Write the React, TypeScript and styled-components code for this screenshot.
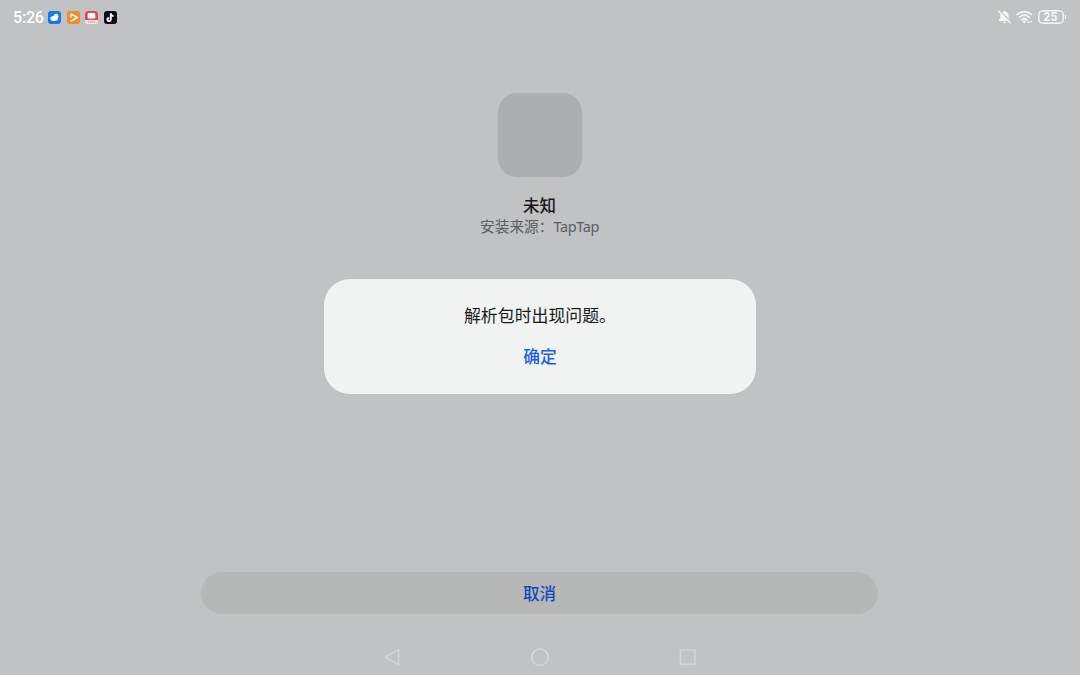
import React from 'react'
import styled, { createGlobalStyle } from 'styled-components'

const GlobalStyle = createGlobalStyle`
    * {
        box-sizing: border-box;
    }
    body {
        margin: 0;
        background: #c1c2c4;
        font-family: "Noto Sans CJK SC", "Noto Sans", sans-serif;
    }
`

const App = () => {
    return (
        <Screen>
            <GlobalStyle />
            <StatusBar>
                <StatusGroup>
                    <Clock>5:26</Clock>
                    <AppIcons>
                        <WeatherIcon />
                        <VideoIcon />
                        <TvIcon />
                        <TiktokIcon />
                    </AppIcons>
                </StatusGroup>
                <StatusGroup>
                    <MuteIcon />
                    <WifiIcon />
                    <Battery>
                        <BatteryBody>25</BatteryBody>
                        <BatteryTip />
                    </Battery>
                </StatusGroup>
            </StatusBar>
            <Main>
                <AppLogo />
                <AppName>未知</AppName>
                <Source>安装来源：<Latin>TapTap</Latin></Source>
            </Main>
            <CancelButton>取消</CancelButton>
            <NavBar>
                <svg width="18" height="18" viewBox="0 0 18 18">
                    <path d="M15.6 1.7v14.8L2.2 9.1z" />
                </svg>
                <svg width="18" height="18" viewBox="0 0 18 18">
                    <circle cx="9" cy="9.2" r="8.2" />
                </svg>
                <svg width="18" height="18" viewBox="0 0 18 18">
                    <rect x="1.4" y="2" width="14.4" height="14.4" />
                </svg>
            </NavBar>
            <Overlay>
                <Dialog>
                    <Message>解析包时出现问题。</Message>
                    <ConfirmButton>确定</ConfirmButton>
                </Dialog>
            </Overlay>
        </Screen>
    )
}

const WeatherIcon = () => (
    <svg width="13" height="13" viewBox="0 0 13 13">
        <rect width="13" height="13" rx="3" fill="#147be6" />
        <circle cx="8" cy="5.3" r="2.5" fill="#fbe9b4" />
        <ellipse cx="6.2" cy="7.5" rx="3.8" ry="2.5" fill="#fff" />
    </svg>
)

const VideoIcon = () => (
    <svg width="13" height="13" viewBox="0 0 13 13">
        <rect width="13" height="13" rx="3" fill="#f58a25" />
        <path d="M4 6.2V2.9l6.2 3.6L4 10.1" fill="none" stroke="#fff" strokeWidth="1.5" strokeLinejoin="round" strokeLinecap="round" />
    </svg>
)

const TvIcon = () => (
    <svg width="13" height="13" viewBox="0 0 13 13">
        <rect width="13" height="13" rx="3" fill="#f6e3e4" />
        <path d="M3 0h7a3 3 0 0 1 3 3v6H0V3a3 3 0 0 1 3-3z" fill="#e5485d" />
        <rect x="2.7" y="2" width="7.6" height="5.6" rx="1.4" fill="#fff" />
        <path d="M3 10.9h7" stroke="#e58a96" strokeWidth="1.4" strokeDasharray="1.3 .6" />
    </svg>
)

const TiktokIcon = () => (
    <svg width="13" height="13" viewBox="0 0 13 13">
        <rect width="13" height="13" rx="3" fill="#0d0b14" />
        <g fill="none" strokeWidth="1.5">
            <path d="M6.5 2.2v6.2a1.7 1.7 0 1 1-1.7-1.7M6.5 2.4c.2 1.4 1.3 2.2 2.7 2.3" stroke="#3fd5dc" />
            <path d="M7.1 2.6v6.2a1.7 1.7 0 1 1-1.7-1.7M7.1 2.8c.2 1.4 1.3 2.2 2.7 2.3" stroke="#e5506c" />
            <path d="M6.8 2.4v6.2a1.7 1.7 0 1 1-1.7-1.7M6.8 2.6c.2 1.4 1.3 2.2 2.7 2.3" stroke="#fff" />
        </g>
    </svg>
)

const MuteIcon = () => (
    <svg width="13" height="14" viewBox="0 0 13 14">
        <path d="M6.5.8c.6 0 1 .4 1 .9 2 .5 3.1 2 3.1 3.9v2.6l1.4 1.8v1H1v-1l1.4-1.8V5.6c0-1.9 1.1-3.4 3.1-3.9 0-.5.4-.9 1-.9zM4.8 11.8h3.4c0 .8-.7 1.4-1.7 1.4s-1.7-.6-1.7-1.4z" fill="#f6f6f7" />
        <path d="M1.5.3 13 12" stroke="#c1c2c4" strokeWidth="1.2" />
        <path d="M.8 1.2l11.4 11.7" stroke="#f6f6f7" strokeWidth="1.4" strokeLinecap="round" />
    </svg>
)

const WifiIcon = () => (
    <svg width="17" height="14" viewBox="0 0 17 14">
        <g fill="none" stroke="#f6f6f7" strokeWidth="1.8" strokeLinecap="round">
            <path d="M1.2 4.4a10.4 10.4 0 0 1 14.2 0" />
            <path d="M3.5 7.1a7 7 0 0 1 9.6 0" />
            <path d="M5.8 9.7a3.6 3.6 0 0 1 5 0" />
        </g>
        <path d="M6.3 11.2a2.8 2.8 0 0 1 4 0l-2 2.4z" fill="#f6f6f7" />
        <path d="M11 13l1.4-2 1.4 2zM13.6 11l1.4 2 1.4-2z" fill="#f6f6f7" />
    </svg>
)

const Screen = styled.div`
    position: relative;
    width: 1080px;
    height: 675px;
    background: #c1c2c4;
    display: flex;
    flex-direction: column;
    overflow: hidden;
`

const StatusBar = styled.div`
    height: 34px;
    padding: 0 14px 0 13px;
    display: flex;
    align-items: center;
    justify-content: space-between;
`

const StatusGroup = styled.div`
    display: flex;
    align-items: center;
    gap: 5px;
`

const Clock = styled.span`
    width: 30px;
    font-family: Roboto, sans-serif;
    font-size: 16px;
    font-weight: 500;
    line-height: 20px;
    letter-spacing: -0.2px;
    color: #fff;
    padding-top: 1px;
    white-space: nowrap;
`

const AppIcons = styled.div`
    display: flex;
    gap: 5.5px;
`

const Battery = styled.div`
    display: flex;
    align-items: center;
    gap: 1px;
`

const BatteryBody = styled.div`
    width: 26px;
    height: 14px;
    border: 1px solid #f6f6f7;
    box-shadow: inset 0 0 0 0.5px #f6f6f7;
    border-radius: 4.5px;
    color: #f6f6f7;
    font-family: Roboto, sans-serif;
    font-size: 12px;
    font-weight: 700;
    line-height: 13px;
    text-align: center;
`

const BatteryTip = styled.div`
    width: 1.5px;
    height: 4px;
    background: #f6f6f7;
`

const Main = styled.div`
    flex: 1;
    padding-top: 59px;
    padding-right: 1px;
    display: flex;
    flex-direction: column;
    align-items: center;
`

const AppLogo = styled.div`
    width: 84px;
    height: 84px;
    border-radius: 19px;
    background: #adaeb0;
`

const AppName = styled.div`
    margin-top: 17px;
    font-size: 16.5px;
    font-weight: 500;
    line-height: 22px;
    color: #17181a;
`

const Source = styled.div`
    font-size: 14.7px;
    line-height: 20px;
    color: #5c5d5f;
    white-space: nowrap;
`

const Latin = styled.span`
    font-family: "Noto Sans", sans-serif;
    font-size: 14.5px;
    letter-spacing: -0.4px;
`

const CancelButton = styled.button`
    width: 677px;
    height: 42px;
    margin: 0 0 0 201px;
    padding: 0;
    border: 0;
    border-radius: 21px;
    background: #b6b8b7;
    color: #1448c0;
    font-family: inherit;
    font-size: 16.5px;
    font-weight: 500;
`

const NavBar = styled.div`
    height: 61px;
    padding: 34px 383px 0;
    display: flex;
    justify-content: space-between;

    svg {
        fill: none;
        stroke: #d3d4d6;
        stroke-width: 1.6;
        stroke-linejoin: round;
    }
`

const Overlay = styled.div`
    position: absolute;
    inset: 0;
    display: flex;
    justify-content: center;
    align-items: flex-start;
    padding-top: 279px;
`

const Dialog = styled.div`
    width: 432px;
    height: 115px;
    padding-top: 24px;
    border-radius: 26px;
    background: #f0f3f2;
    display: flex;
    flex-direction: column;
    align-items: center;
    gap: 17px;
`

const Message = styled.div`
    font-size: 16.9px;
    line-height: 24px;
    color: #1a1b1c;
`

const ConfirmButton = styled.button`
    padding: 0;
    border: 0;
    background: none;
    color: #1a5fe0;
    font-family: inherit;
    font-size: 16.8px;
    font-weight: 500;
    line-height: 24px;
`

export default App
